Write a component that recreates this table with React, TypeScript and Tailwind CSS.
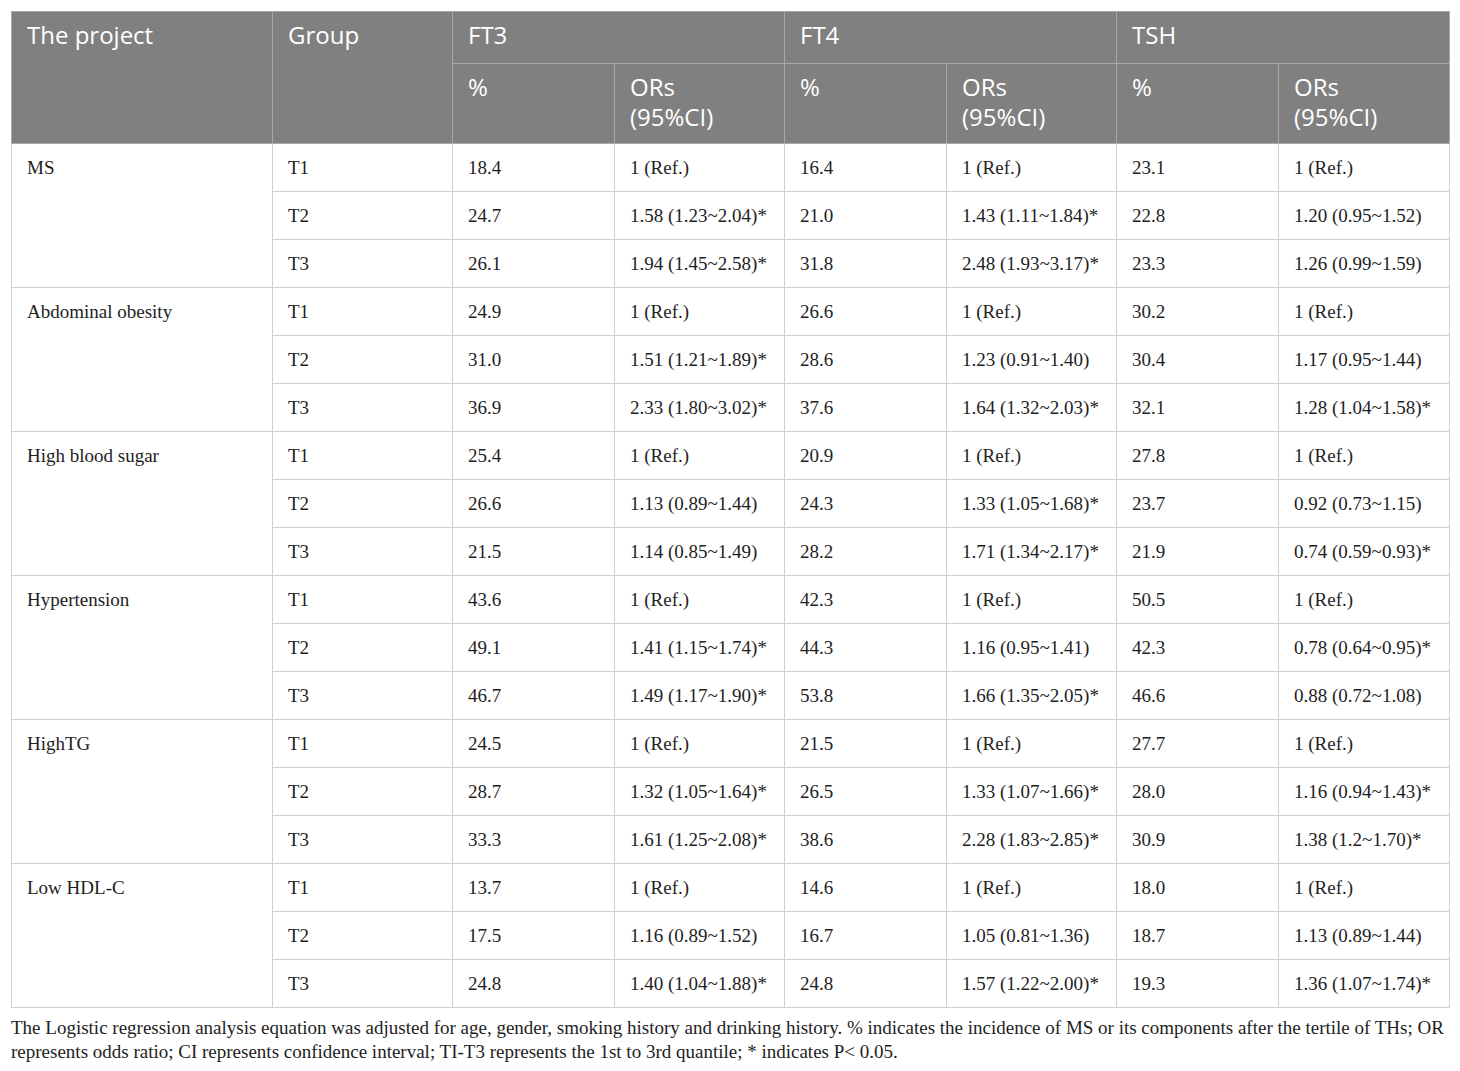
import React from 'react';

type Row = { group: string; v: string[] };
type Block = { name: string; rows: Row[] };

const blocks: Block[] = [
  {
    name: 'MS',
    rows: [
      { group: 'T1', v: ['18.4', '1 (Ref.)', '16.4', '1 (Ref.)', '23.1', '1 (Ref.)'] },
      { group: 'T2', v: ['24.7', '1.58 (1.23~2.04)*', '21.0', '1.43 (1.11~1.84)*', '22.8', '1.20 (0.95~1.52)'] },
      { group: 'T3', v: ['26.1', '1.94 (1.45~2.58)*', '31.8', '2.48 (1.93~3.17)*', '23.3', '1.26 (0.99~1.59)'] },
    ],
  },
  {
    name: 'Abdominal obesity',
    rows: [
      { group: 'T1', v: ['24.9', '1 (Ref.)', '26.6', '1 (Ref.)', '30.2', '1 (Ref.)'] },
      { group: 'T2', v: ['31.0', '1.51 (1.21~1.89)*', '28.6', '1.23 (0.91~1.40)', '30.4', '1.17 (0.95~1.44)'] },
      { group: 'T3', v: ['36.9', '2.33 (1.80~3.02)*', '37.6', '1.64 (1.32~2.03)*', '32.1', '1.28 (1.04~1.58)*'] },
    ],
  },
  {
    name: 'High blood sugar',
    rows: [
      { group: 'T1', v: ['25.4', '1 (Ref.)', '20.9', '1 (Ref.)', '27.8', '1 (Ref.)'] },
      { group: 'T2', v: ['26.6', '1.13 (0.89~1.44)', '24.3', '1.33 (1.05~1.68)*', '23.7', '0.92 (0.73~1.15)'] },
      { group: 'T3', v: ['21.5', '1.14 (0.85~1.49)', '28.2', '1.71 (1.34~2.17)*', '21.9', '0.74 (0.59~0.93)*'] },
    ],
  },
  {
    name: 'Hypertension',
    rows: [
      { group: 'T1', v: ['43.6', '1 (Ref.)', '42.3', '1 (Ref.)', '50.5', '1 (Ref.)'] },
      { group: 'T2', v: ['49.1', '1.41 (1.15~1.74)*', '44.3', '1.16 (0.95~1.41)', '42.3', '0.78 (0.64~0.95)*'] },
      { group: 'T3', v: ['46.7', '1.49 (1.17~1.90)*', '53.8', '1.66 (1.35~2.05)*', '46.6', '0.88 (0.72~1.08)'] },
    ],
  },
  {
    name: 'HighTG',
    rows: [
      { group: 'T1', v: ['24.5', '1 (Ref.)', '21.5', '1 (Ref.)', '27.7', '1 (Ref.)'] },
      { group: 'T2', v: ['28.7', '1.32 (1.05~1.64)*', '26.5', '1.33 (1.07~1.66)*', '28.0', '1.16 (0.94~1.43)*'] },
      { group: 'T3', v: ['33.3', '1.61 (1.25~2.08)*', '38.6', '2.28 (1.83~2.85)*', '30.9', '1.38 (1.2~1.70)*'] },
    ],
  },
  {
    name: 'Low HDL-C',
    rows: [
      { group: 'T1', v: ['13.7', '1 (Ref.)', '14.6', '1 (Ref.)', '18.0', '1 (Ref.)'] },
      { group: 'T2', v: ['17.5', '1.16 (0.89~1.52)', '16.7', '1.05 (0.81~1.36)', '18.7', '1.13 (0.89~1.44)'] },
      { group: 'T3', v: ['24.8', '1.40 (1.04~1.88)*', '24.8', '1.57 (1.22~2.00)*', '19.3', '1.36 (1.07~1.74)*'] },
    ],
  },
];

const th =
  'border border-[#a9a9a9] px-[15px] pt-[8px] align-top text-left font-normal text-white text-[24px] leading-[30px]';
const td = 'border border-[#cfcfcf] px-[15px] align-top h-[48px] pt-[12px] text-[19px] leading-[24px] text-[#1e1e1e]';

const App: React.FC = () => {
  return (
    <div className="bg-white w-[1460px] min-h-[1071px] pt-[11px] px-[11px]">
      <table className="w-[1438px] table-fixed border-collapse border border-[#cfcfcf] font-['Liberation_Serif',serif]">
        <colgroup>
          <col className="w-[261px]" />
          <col className="w-[180px]" />
          <col className="w-[162px]" />
          <col className="w-[170px]" />
          <col className="w-[162px]" />
          <col className="w-[170px]" />
          <col className="w-[162px]" />
          <col className="w-[171px]" />
        </colgroup>
        <thead className="bg-[#7f807f] font-['Open_Sans',sans-serif]">
          <tr className="h-[52px]">
            <th rowSpan={2} className={th}>The project</th>
            <th rowSpan={2} className={th}>Group</th>
            <th colSpan={2} className={th}>FT3</th>
            <th colSpan={2} className={th}>FT4</th>
            <th colSpan={2} className={th}>TSH</th>
          </tr>
          <tr className="h-[80px]">
            <th className={th}>%</th>
            <th className={th}>ORs<br />(95%CI)</th>
            <th className={th}>%</th>
            <th className={th}>ORs<br />(95%CI)</th>
            <th className={th}>%</th>
            <th className={th}>ORs<br />(95%CI)</th>
          </tr>
        </thead>
        <tbody>
          {blocks.map((b) =>
            b.rows.map((r, i) => (
              <tr key={b.name + r.group}>
                {i === 0 && (
                  <td rowSpan={3} className={td}>
                    {b.name}
                  </td>
                )}
                <td className={td}>{r.group}</td>
                {r.v.map((x, j) => (
                  <td key={j} className={td}>
                    {x}
                  </td>
                ))}
              </tr>
            ))
          )}
        </tbody>
      </table>
      <p className="mt-[8px] font-['Liberation_Serif',serif] text-[19px] leading-[24px] text-[#1e1e1e] w-[1438px]">
        The Logistic regression analysis equation was adjusted for age, gender, smoking history and drinking history. % indicates the incidence of MS or its components after the tertile of THs; OR represents odds ratio; CI represents confidence interval; TI-T3 represents the 1st to 3rd quantile; * indicates P&lt; 0.05.
      </p>
    </div>
  );
};

export default App;
